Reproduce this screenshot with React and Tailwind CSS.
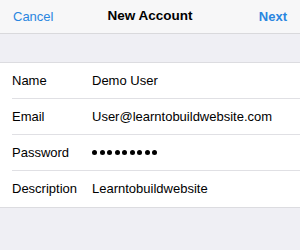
import React from 'react';

const rows = [
  { label: 'Name', value: 'Demo User' },
  { label: 'Email', value: 'User@learntobuildwebsite.com' },
  { label: 'Password', value: null },
  { label: 'Description', value: 'Learntobuildwebsite' },
];

const App = () => {
  return (
    <div className="w-[300px] h-[250px] bg-[#efeff4] font-['Liberation_Sans',Arial,sans-serif] text-[13px] text-black overflow-hidden">
      {/* Nav bar */}
      <div className="h-[34px] bg-[#f7f7f8] border-b border-[#d9d9dc] grid grid-cols-[1fr_auto_1fr] items-center px-[13px]">
        <span className="text-[#2a86e0] text-[13px]">Cancel</span>
        <span className="font-semibold text-[13.5px]">New Account</span>
        <span className="text-[#2a86e0] font-semibold text-[13px] text-right">Next</span>
      </div>

      {/* Spacer */}
      <div className="h-[28px]" />

      {/* Form list */}
      <div className="bg-white border-y border-[#dcdce0]">
        {rows.map((row, index) => (
          <div key={index} className="pl-[12px]">
            <div className={`flex items-center h-[36px] ${index < rows.length - 1 ? 'border-b border-[#e0e0e4]' : ''}`}>
              <span className="w-[80px] shrink-0">{row.label}</span>
              {row.value ? (
                <span>{row.value}</span>
              ) : (
                <div className="flex gap-[2.5px]">
                  {Array.from({ length: 9 }).map((_, i) => (
                    <span key={i} className="w-[5px] h-[5px] rounded-full bg-black" />
                  ))}
                </div>
              )}
            </div>
          </div>
        ))}
      </div>
    </div>
  );
};

export default App;
